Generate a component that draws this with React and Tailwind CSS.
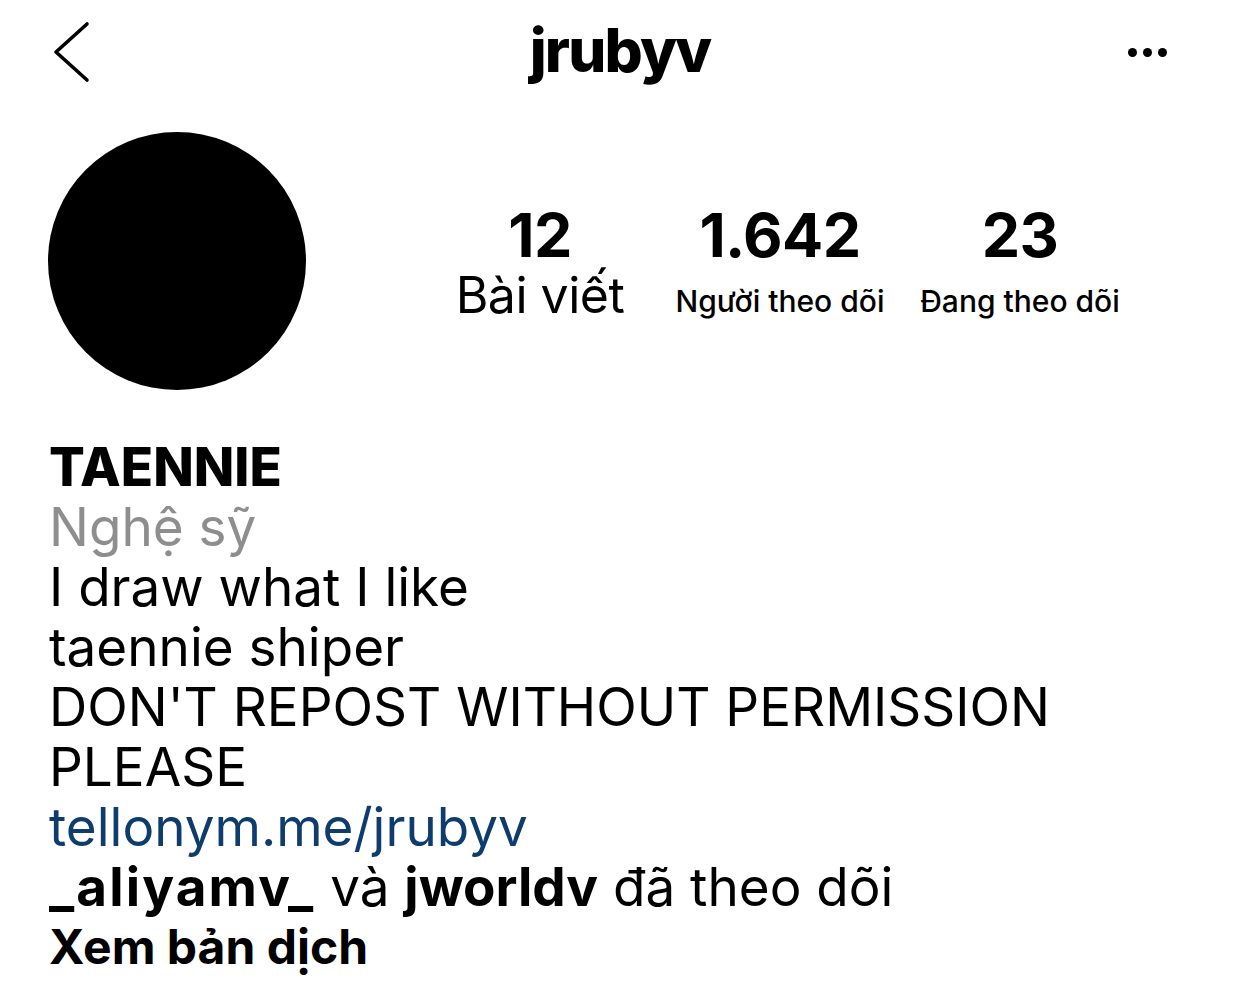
const Stat = ({ value, label, labelClass }) => (
    <div className="w-[240px] flex flex-col items-center">
        <div className="text-[61px] leading-[64px] font-bold tracking-[-0.01em]">{value}</div>
        <div className={labelClass}>{label}</div>
    </div>
)

const App = () => {
    return (
        <div
            className="w-[1242px] h-[989px] bg-white text-black overflow-hidden"
            style={{ fontFamily: 'Inter, "Noto Sans", sans-serif' }}
        >
            {/* header */}
            <div className="flex items-center h-[104px] pl-[53px] pr-[75px]">
                <div className="flex-1">
                    <svg width="38" height="62" viewBox="0 0 38 62" fill="none">
                        <polyline
                            points="34,3 3,31 34,59"
                            stroke="black"
                            strokeWidth="3.6"
                            strokeLinecap="round"
                            strokeLinejoin="round"
                        />
                    </svg>
                </div>
                <div className="text-[60px] font-extrabold tracking-[-0.03em] leading-none pb-[4px] ml-[20px]">
                    jrubyv
                </div>
                <div className="flex-1 flex justify-end">
                    <div className="flex gap-[6px]">
                        <span className="w-[9px] h-[9px] rounded-full bg-black" />
                        <span className="w-[9px] h-[9px] rounded-full bg-black" />
                        <span className="w-[9px] h-[9px] rounded-full bg-black" />
                    </div>
                </div>
            </div>

            {/* avatar + stats */}
            <div className="flex items-center pl-[48px] pt-[28px]">
                <div className="w-[258px] h-[258px] rounded-full bg-black shrink-0" />
                <div className="flex items-start ml-[114px] mt-[12px]">
                    <Stat
                        value="12"
                        label="Bài viết"
                        labelClass="text-[50px] leading-[60px] tracking-[-0.01em] -mt-[2px]"
                    />
                    <Stat
                        value="1.642"
                        label="Người theo dõi"
                        labelClass="text-[30px] leading-[60px] font-medium pt-[4px]"
                    />
                    <Stat
                        value="23"
                        label="Đang theo dõi"
                        labelClass="text-[30px] leading-[60px] font-medium pt-[4px]"
                    />
                </div>
            </div>

            {/* bio */}
            <div className="pl-[49px] pt-[47px] text-[53px] leading-[60px]">
                <div className="font-extrabold">TAENNIE</div>
                <div className="text-[#8e8e8e]">Nghệ sỹ</div>
                <div>I draw what I like</div>
                <div>taennie shiper</div>
                <div>DON'T REPOST WITHOUT PERMISSION</div>
                <div>PLEASE</div>
                <div className="text-[#0e3d6d]">tellonym.me/jrubyv</div>
                <div>
                    <span className="font-bold tracking-[0.04em]">_aliyamv_</span> và{' '}
                    <span className="font-bold">jworldv</span> đã theo dõi
                </div>
                <div className="font-bold text-[48px]">Xem bản dịch</div>
            </div>
        </div>
    )
}

export default App
